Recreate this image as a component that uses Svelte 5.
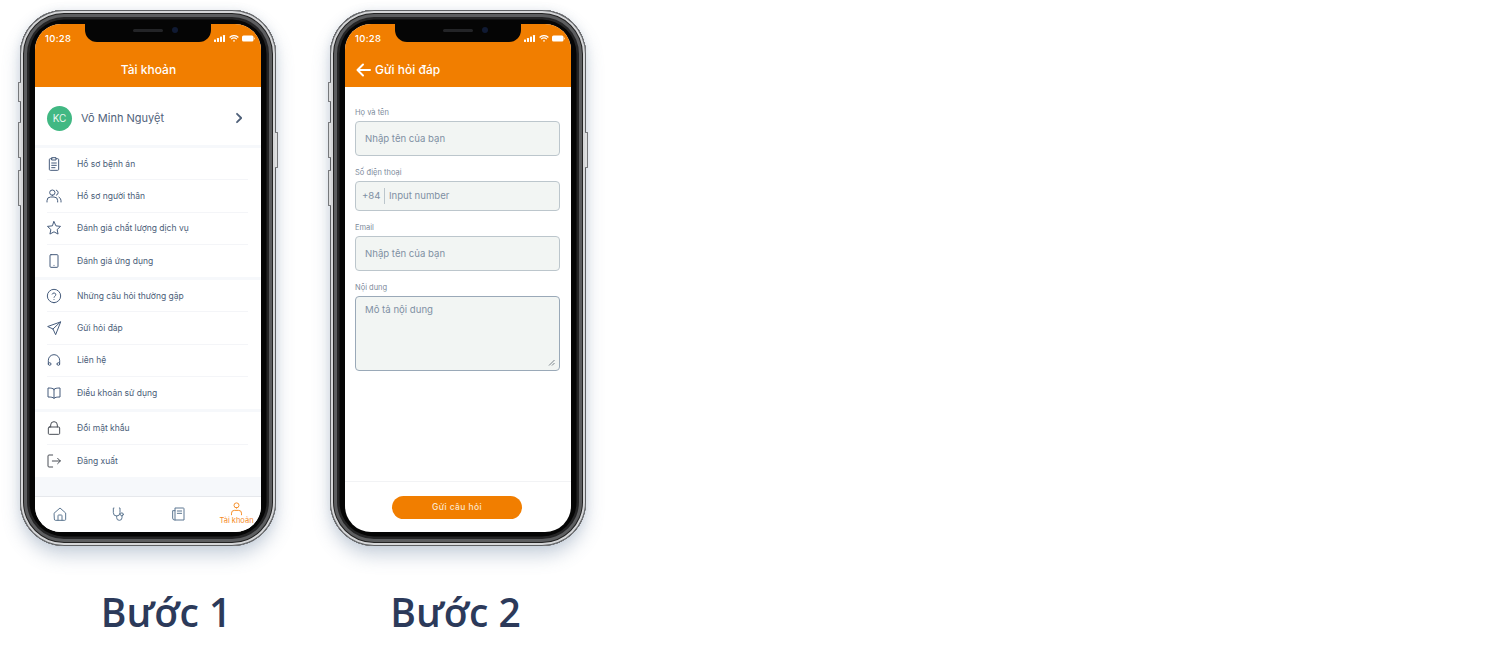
<script lang="ts">
  const groups = [
    [
      { icon: "clipboard", label: "Hồ sơ bệnh án" },
      { icon: "users", label: "Hồ sơ người thân" },
      { icon: "star", label: "Đánh giá chất lượng dịch vụ" },
      { icon: "phone", label: "Đánh giá ứng dụng" }
    ],
    [
      { icon: "help", label: "Những câu hỏi thường gặp" },
      { icon: "send", label: "Gửi hỏi đáp" },
      { icon: "headset", label: "Liên hệ" },
      { icon: "book", label: "Điều khoản sử dụng" }
    ],
    [
      { icon: "lock", label: "Đổi mật khẩu" },
      { icon: "logout", label: "Đăng xuất" }
    ]
  ];

  const paths: Record<string, string> = {
    clipboard: "M9 4H6.500A1.500 1.500 0 0 0 5 5.500V20a1.500 1.500 0 0 0 1.500 1.500h11A1.500 1.500 0 0 0 19 20V5.500A1.500 1.500 0 0 0 17.500 4H15M9 2.500h6V6H9zM8.500 10.500h7M8.500 14h7M8.500 17.500h5",
    users: "M9.500 11a4 4 0 1 0 0-8 4 4 0 0 0 0 8zM1.500 21v-2a5.500 5.500 0 0 1 5.500-5.500h5a5.500 5.500 0 0 1 5.500 5.500v2M15.500 3.200a4 4 0 0 1 0 7.600M19.500 13.800a5.500 5.500 0 0 1 3 5.200v2",
    star: "M12 2.500l2.900 6.300 6.900.8-5.100 4.700 1.400 6.800-6.100-3.400-6.100 3.400 1.400-6.800-5.100-4.700 6.900-.8z",
    phone: "M7.500 2.500h9A1.500 1.500 0 0 1 18 4v16a1.500 1.500 0 0 1-1.500 1.500h-9A1.500 1.500 0 0 1 6 20V4a1.500 1.500 0 0 1 1.500-1.500zM12 18.500v.1",
    help: "M12 22a10 10 0 1 0 0-20 10 10 0 0 0 0 20zM9.300 9.200a2.800 2.800 0 0 1 5.400.9c0 1.900-2.700 2.400-2.700 3.900M12 17.300v.1",
    send: "M21.500 3L2.500 9.800l8 3.700 3.700 8zM21.500 3L10.500 13.500",
    headset: "M3.500 18v-5.500a8.500 8.500 0 0 1 17 0V18M3.500 18a2 2 0 1 0 4 0 2 2 0 1 0-4 0M16.500 18a2 2 0 1 0 4 0 2 2 0 1 0-4 0",
    book: "M12 6.500C10.500 5 8 4.500 3 4.500V18c5 0 7.500.5 9 2 1.500-1.500 4-2 9-2V4.500C16 4.500 13.500 5 12 6.500zM12 6.500V20",
    lock: "M5 10.500h14a1.500 1.500 0 0 1 1.500 1.500v8a1.500 1.500 0 0 1-1.500 1.500H5A1.500 1.500 0 0 1 3.500 20v-8A1.500 1.500 0 0 1 5 10.500zM7 10.500V7.500a5 5 0 0 1 10 0v3",
    logout: "M10 3H4.500A1.500 1.500 0 0 0 3 4.500v15A1.500 1.500 0 0 0 4.500 21H10M9.500 12h12M17.500 8l4 4-4 4",
    home: "M3.500 10.500L12 3l8.500 7.500V20a1.500 1.500 0 0 1-1.500 1.500H5A1.500 1.500 0 0 1 3.500 20zM9 21.500V14.500a1 1 0 0 1 1-1h4a1 1 0 0 1 1 1v7",
    scope: "M4.500 3H3.500v7a5 5 0 0 0 10 0V3h-1M8.500 15v2.500a4 4 0 0 0 8 0V15M18.500 12.500a2.200 2.200 0 1 1-4.400 0 2.200 2.200 0 0 1 4.400 0z",
    news: "M8 3h12a1 1 0 0 1 1 1v17H7a3 3 0 0 1-3-3V7h3.500M7.500 21V3.500M11 7.500h6.500M11 11h6.500",
    person: "M12 11a4 4 0 1 0 0-8 4 4 0 0 0 0 8zM4 22v-2.500A4.500 4.500 0 0 1 8.500 15h7a4.500 4.500 0 0 1 4.500 4.500V22"
  };
</script>

{#snippet icon(name: string, size = 16)}
  <svg width={size} height={size} viewBox="0 0 24 24" fill="none" stroke="currentColor" stroke-width="1.500" stroke-linecap="round" stroke-linejoin="round">
    <path d={paths[name]} />
  </svg>
{/snippet}

{#snippet device(screen: import("svelte").Snippet)}
  <div class="phone">
    <span class="key key-mute"></span>
    <span class="key key-up"></span>
    <span class="key key-down"></span>
    <span class="key key-power"></span>
    <div class="screen">
      <div class="notch">
        <span class="speaker"></span>
        <span class="camera"></span>
      </div>
      {@render screen()}
    </div>
  </div>
{/snippet}

{#snippet statusbar()}
  <div class="statusbar">
    <span class="time">10:28</span>
    <span class="status-icons">
      <svg width="12" height="7" viewBox="0 0 12 7" fill="#fff">
        <rect x="0" y="4.500" width="2" height="2.500" rx=".4" />
        <rect x="3" y="3" width="2" height="4" rx=".4" />
        <rect x="6" y="1.500" width="2" height="5.500" rx=".4" />
        <rect x="9" y="0" width="2" height="7" rx=".4" />
      </svg>
      <svg width="10" height="7" viewBox="0 0 10 7" fill="none" stroke="#fff" stroke-width="1.200">
        <path d="M.6 2.500a6 6 0 0 1 8.800 0M2.200 4.100a3.700 3.700 0 0 1 5.600 0" />
        <circle cx="5" cy="5.900" r=".8" fill="#fff" stroke="none" />
      </svg>
      <svg width="13" height="7" viewBox="0 0 13 7" fill="#fff">
        <rect x="0" y=".5" width="11.500" height="6" rx="1.500" />
        <rect x="12" y="2.500" width="1" height="2" rx=".4" opacity=".6" />
      </svg>
    </span>
  </div>
{/snippet}

{#snippet accountScreen()}
  <header class="appbar">
    {@render statusbar()}
    <h1 class="title center">Tài khoản</h1>
  </header>
  <main class="account">
    <div class="profile">
      <span class="avatar">KC</span>
      <span class="name">Võ Minh Nguyệt</span>
      <svg class="chevron" width="12" height="12" viewBox="0 0 12 12" fill="none" stroke="#4f6079" stroke-width="1.800" stroke-linecap="round" stroke-linejoin="round">
        <path d="M4 1.800L8.200 6 4 10.200" />
      </svg>
    </div>
    {#each groups as group}
      <ul class="group">
        {#each group as item}
          <li class="row">
            <span class="row-icon" class:grey={item.icon === "lock" || item.icon === "logout"}>{@render icon(item.icon)}</span>
            <span class="row-label">{item.label}</span>
          </li>
        {/each}
      </ul>
    {/each}
  </main>
  <nav class="tabbar">
    <span class="tab">{@render icon("home")}</span>
    <span class="tab">{@render icon("scope")}</span>
    <span class="tab">{@render icon("news")}</span>
    <span class="tab active">
      {@render icon("person", 15)}
      <span class="tab-label">Tài khoản</span>
    </span>
  </nav>
{/snippet}

{#snippet formScreen()}
  <header class="appbar">
    {@render statusbar()}
    <div class="title-row">
      <svg width="15" height="14" viewBox="0 0 15 14" fill="none" stroke="#fff" stroke-width="2" stroke-linecap="round" stroke-linejoin="round">
        <path d="M14 7H1.500M7 1.500L1.500 7 7 12.500" />
      </svg>
      <h1 class="title">Gửi hỏi đáp</h1>
    </div>
  </header>
  <main class="form">
    <div class="field">
      <span class="field-label">Họ và tên</span>
      <div class="input">Nhập tên của bạn</div>
    </div>
    <div class="field">
      <span class="field-label">Số điện thoại</span>
      <div class="input input-phone"><span class="prefix">+84</span><span>Input number</span></div>
    </div>
    <div class="field">
      <span class="field-label">Email</span>
      <div class="input">Nhập tên của bạn</div>
    </div>
    <div class="field">
      <span class="field-label">Nội dung</span>
      <div class="input textarea">
        Mô tả nội dung
        <svg class="grip" width="7" height="7" viewBox="0 0 7 7" stroke="#5b6470" stroke-width=".8"><path d="M1 6.500L6.500 1M4 6.500L6.500 4" /></svg>
      </div>
    </div>
  </main>
  <footer class="form-footer">
    <span class="submit">Gửi câu hỏi</span>
  </footer>
{/snippet}

<div class="page">
  <section class="step step-one">
    {@render device(accountScreen)}
    <h2 class="caption">Bước 1</h2>
  </section>
  <section class="step step-two">
    {@render device(formScreen)}
    <h2 class="caption">Bước 2</h2>
  </section>
</div>

<style>
  :global(body) {
    background: #fff;
    font-family: Inter, "Noto Sans", sans-serif;
  }

  .page {
    display: flex;
    gap: 54px;
    padding: 10px 0 0 20px;
    height: 638px;
    overflow: hidden;
  }

  .step {
    width: 256px;
  }

  .caption {
    margin: 41px 0 0;
    font-family: "Open Sans", sans-serif;
    font-size: 39px;
    line-height: 49px;
    font-weight: 600;
    color: #2c3a5a;
    text-align: center;
    white-space: nowrap;
  }

  .step-one .caption { padding-left: 36px; }
  .step-two .caption { padding-right: 5px; }

  .phone {
    position: relative;
    box-sizing: border-box;
    width: 256px;
    height: 536px;
    padding: 14px 15px;
    border-radius: 44px;
    background: #050505;
    box-shadow:
      inset 0 0 0 1px #5f6164,
      inset 0 0 0 3px #d5d6d8,
      inset 0 0 0 4px #222,
      inset 0 0 0 7px #5d5e60,
      inset 0 0 0 9.500px #242425,
      0 10px 18px rgba(90, 115, 150, 0.3),
      0 0 8px rgba(120, 140, 170, 0.15);
  }

  .key {
    position: absolute;
    box-sizing: border-box;
    width: 3px;
    background: #dcddde;
    border: 1px solid #77797c;
  }

  .key-mute { left: -2px; top: 72px; height: 20px; border-right: none; border-radius: 1px 0 0 1px; }
  .key-up { left: -2px; top: 112px; height: 36px; border-right: none; border-radius: 1px 0 0 1px; }
  .key-down { left: -2px; top: 160px; height: 36px; border-right: none; border-radius: 1px 0 0 1px; }
  .key-power { right: -2px; top: 122px; height: 36px; border-left: none; border-radius: 0 1px 1px 0; }

  .screen {
    position: relative;
    display: flex;
    flex-direction: column;
    height: 100%;
    border-radius: 26px;
    background: #fff;
    overflow: hidden;
  }

  .notch {
    position: absolute;
    z-index: 2;
    top: 0;
    left: 50px;
    width: 126px;
    height: 18px;
    border-radius: 0 0 12px 12px;
    background: #050505;
  }

  .speaker {
    position: absolute;
    left: 48px;
    top: 5px;
    width: 30px;
    height: 3px;
    border-radius: 2px;
    background: #232427;
  }

  .camera {
    position: absolute;
    left: 87px;
    top: 3px;
    width: 6px;
    height: 6px;
    border-radius: 50%;
    background: #101a33;
  }

  .appbar {
    flex: none;
    box-sizing: border-box;
    height: 62.500px;
    padding: 8px 6px 0 10px;
    background: #f17e00;
    color: #fff;
  }

  .statusbar {
    display: flex;
    align-items: center;
    justify-content: space-between;
    height: 12px;
  }

  .time {
    font-size: 9.500px;
    font-weight: 500;
    letter-spacing: 0.3px;
  }

  .status-icons {
    display: flex;
    align-items: center;
    gap: 3px;
  }

  .title {
    margin: 0;
    font-size: 12px;
    line-height: 16px;
    font-weight: 500;
  }

  .title.center {
    margin-top: 17.500px;
    padding-right: 3px;
    text-align: center;
  }

  .title-row {
    display: flex;
    align-items: center;
    gap: 4px;
    margin: 17.500px 0 0 1px;
  }

  .account {
    flex: 1;
    min-height: 0;
    background: #f6f8fb;
  }

  .profile {
    display: flex;
    align-items: center;
    box-sizing: border-box;
    height: 58.500px;
    padding: 5px 16px 0 12px;
    background: #fff;
  }

  .avatar {
    display: flex;
    align-items: center;
    justify-content: center;
    width: 25px;
    height: 25px;
    border-radius: 50%;
    background: #41b883;
    color: #e9f7f0;
    font-size: 10px;
  }

  .name {
    flex: 1;
    margin-left: 9px;
    font-size: 11px;
    color: #51627a;
  }

  .group {
    list-style: none;
    margin: 3px 0 0;
    padding: 0 13px 0 12px;
    background: #fff;
  }

  .row {
    display: flex;
    align-items: center;
    height: 32.300px;
    border-bottom: 1px solid #f4f5f8;
    box-sizing: border-box;
  }

  .row:last-child {
    border-bottom: none;
  }

  .row-icon {
    display: flex;
    width: 31px;
    margin-left: -1px;
    color: #465c7c;
  }

  .row-icon.grey {
    color: #4a4f57;
  }

  .row-label {
    font-size: 8.500px;
    color: #4a5d78;
  }

  .tabbar {
    flex: none;
    display: grid;
    grid-template-columns: repeat(4, 59px);
    height: 36px;
    margin-left: -5px;
    padding-bottom: 2px;
    border-top: 1px solid #e6e8ec;
    box-sizing: border-box;
    background: #fff;
    color: #5d7791;
  }

  .tab {
    display: flex;
    flex-direction: column;
    align-items: center;
    justify-content: center;
  }

  .tab.active {
    justify-content: flex-start;
    padding-top: 4px;
    color: #f58a1f;
  }

  .tab-label {
    font-size: 7.500px;
    line-height: 9px;
    white-space: nowrap;
  }

  .form {
    flex: 1;
    min-height: 0;
    display: flex;
    flex-direction: column;
    gap: 12px;
    padding: 21px 11px 0 10px;
  }

  .field {
    display: flex;
    flex-direction: column;
    gap: 3.500px;
  }

  .field-label {
    font-size: 7.500px;
    line-height: 10px;
    color: #7d8b9b;
  }

  .input {
    position: relative;
    display: flex;
    align-items: center;
    box-sizing: border-box;
    height: 34.500px;
    padding: 0 9px;
    border: 1px solid #bcc6cc;
    border-radius: 4px;
    background: #f2f5f3;
    font-size: 9.600px;
    color: #7f90a3;
  }

  .input-phone {
    height: 29.500px;
    padding-left: 6px;
  }

  .prefix {
    margin-right: 4px;
    padding-right: 3.500px;
    border-right: 1px solid #bcc6cc;
    line-height: 16px;
  }

  .textarea {
    align-items: flex-start;
    height: 75px;
    padding-top: 6px;
    line-height: 13px;
    border-color: #9aa9b8;
  }

  .grip {
    position: absolute;
    right: 4px;
    bottom: 4px;
  }

  .form-footer {
    flex: none;
    display: flex;
    justify-content: center;
    align-items: flex-start;
    height: 51px;
    padding: 13.500px 2px 0 0;
    box-sizing: border-box;
    border-top: 1px solid #f2f3f5;
  }

  .submit {
    display: flex;
    align-items: center;
    justify-content: center;
    width: 130px;
    height: 23px;
    border-radius: 12px;
    background: #f17e00;
    color: #fbe5cc;
    font-size: 8.500px;
    font-weight: 500;
    letter-spacing: 0.4px;
  }
</style>
